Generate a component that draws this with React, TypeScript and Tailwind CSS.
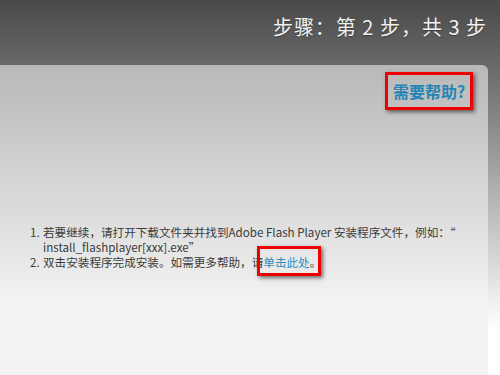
const font = { fontFamily: '"Noto Sans CJK SC", "Noto Sans", sans-serif' };

export default function App() {
  return (
    <div
      className="w-[500px] h-[375px] overflow-hidden flex flex-col bg-[linear-gradient(to_bottom,#4a4a4a_0px,#686868_65px,#ffffff_330px)]"
      style={font}
    >
      {/* Header */}
      <div className="h-[65px] shrink-0 flex justify-end items-start pr-[13px] pt-[12px]">
        <h1 className="text-[20px] leading-[30px] text-[#f2f2f2] tracking-[1px] [text-shadow:0_1px_1px_rgba(0,0,0,0.35)]">
          步骤：第 2 步，共 3 步
        </h1>
      </div>

      {/* Panel */}
      <div className="w-[488px] flex-1 rounded-tr-[6px] bg-[linear-gradient(to_bottom,#b8b8b8_0px,#f3f3f3_240px)] flex flex-col">
        <div className="flex justify-end pr-[15px] pt-[7px]">
          <div className="w-[88px] h-[38px] border-[3px] border-[#ee0000] shadow-[2px_2px_4px_rgba(0,0,0,0.55)] flex items-center justify-center">
            <span className="text-[16px] font-bold text-[#2585b5] leading-none">需要帮助?</span>
          </div>
        </div>

        <ol className="mt-[115px] pl-[30px] pr-[10px] text-[11.6px] leading-[15px] text-[#3a3a3a]">
          <li className="flex">
            <span className="w-[13px] shrink-0">1.</span>
            <span>
              若要继续，请打开下载文件夹并找到Adobe Flash Player 安装程序文件，例如：“
              <br />
              install_flashplayer[xxx].exe”
            </span>
          </li>
          <li className="flex">
            <span className="w-[13px] shrink-0">2.</span>
            <span>
              双击安装程序完成安装。如需更多帮助，请
              <span className="relative text-[#2a8fc0]">
                单击此处
                <span className="absolute left-[-6px] top-[-8px] w-[64px] h-[30px] border-[3px] border-[#ee0000] shadow-[2px_2px_4px_rgba(0,0,0,0.55)]" />
              </span>
              。
            </span>
          </li>
        </ol>
      </div>
    </div>
  );
}
